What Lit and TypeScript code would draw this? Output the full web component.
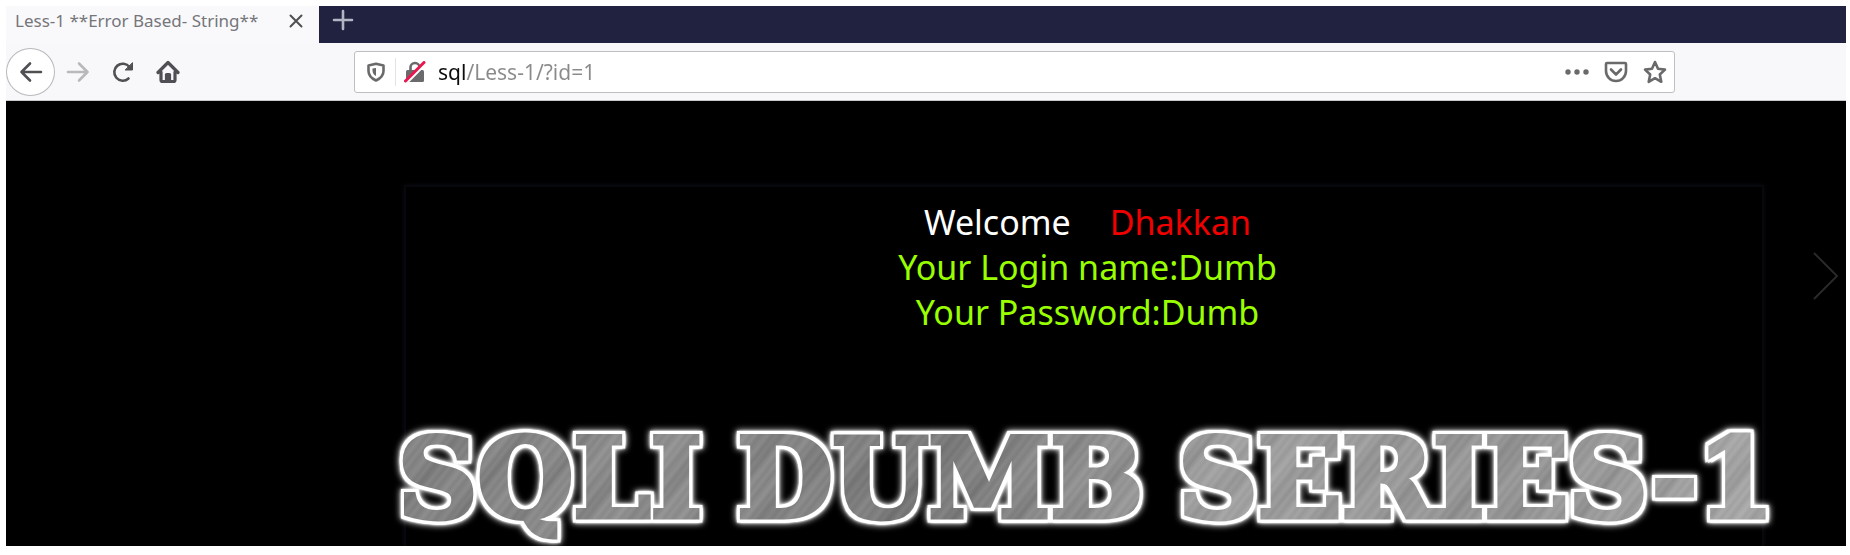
import { LitElement, html, css } from "lit";
import { customElement, property } from "lit/decorators.js";

@customElement("browser-chrome")
class BrowserChrome extends LitElement {
  @property() tabTitle = "";
  @property() address = "";

  static styles = css`
    :host {
      display: block;
      font-family: "Noto Sans", "Open Sans", sans-serif;
    }
    button {
      display: flex;
      align-items: center;
      justify-content: center;
      flex: none;
      padding: 0;
      border: 0;
      background: none;
      color: #505054;
    }
    svg {
      display: block;
      fill: none;
      stroke: currentColor;
      stroke-width: 2.6;
      stroke-linecap: round;
      stroke-linejoin: round;
    }
    .tabs {
      display: flex;
      height: 37px;
      background: #20223f;
    }
    .tab {
      display: flex;
      align-items: center;
      justify-content: space-between;
      box-sizing: border-box;
      width: 313px;
      padding: 0 11px 8px 9px;
      background: #f9f9fb;
      color: #75757a;
      font-size: 17px;
      line-height: 24px;
      white-space: nowrap;
    }
    .close {
      width: 24px;
      height: 24px;
    }
    .close svg {
      stroke-width: 2;
    }
    .add {
      width: 48px;
      height: 28px;
      color: #b4b5c4;
    }
    .toolbar {
      display: flex;
      align-items: center;
      height: 57px;
      border-bottom: 1px solid #c9c9cb;
      background: #f8f8fa;
    }
    .nav {
      display: flex;
      align-items: center;
      width: 348px;
      flex: none;
    }
    .nav button {
      width: 45px;
      height: 48px;
    }
    .nav .back {
      box-sizing: border-box;
      width: 49px;
      border: 1px solid #b9b9bb;
      border-radius: 50%;
      background: #fff;
    }
    .nav .forward {
      color: #b9b9bc;
    }
    .nav .home svg {
      stroke-width: 3.2;
    }
    .bar {
      display: flex;
      align-items: center;
      flex: 1;
      box-sizing: border-box;
      height: 42px;
      margin-right: 171px;
      padding: 0 0 0 8px;
      border: 1px solid #bfbfc1;
      border-radius: 3px;
      background: #fff;
    }
    .bar button {
      width: 39px;
      height: 36px;
      color: #6a6a6d;
    }
    .bar .shield {
      width: 26px;
    }
    .bar .lock {
      border-left: 1px solid #e3e3e5;
      height: 28px;
      margin-left: 6px;
    }
    .address {
      flex: 1;
      min-width: 0;
      padding: 0 0 0 4px;
      border: 0;
      outline: 0;
      font: 21px/28px "Noto Sans", "Open Sans", sans-serif;
      color: transparent;
      background: linear-gradient(90deg, #0c0c0d 32px, #8a8a8d 32px);
      -webkit-background-clip: text;
      background-clip: text;
    }
  `;

  render() {
    return html`
      <div class="tabs">
        <div class="tab">
          <span>${this.tabTitle}</span>
          <button class="close" aria-label="Close tab">
            <svg width="14" height="14" viewBox="0 0 14 14"><path d="M1.5 1.5 12.5 12.5M12.5 1.5 1.5 12.5" /></svg>
          </button>
        </div>
        <button class="add" aria-label="New tab">
          <svg width="22" height="22" viewBox="0 0 22 22"><path d="M11 2V20M2 11H20" /></svg>
        </button>
      </div>
      <div class="toolbar">
        <div class="nav">
          <button class="back" aria-label="Back">
            <svg width="24" height="24" viewBox="0 0 24 24"><path d="M22 12H2.500M11 3.500 2.500 12 11 20.500" /></svg>
          </button>
          <button class="forward" aria-label="Forward">
            <svg width="24" height="24" viewBox="0 0 24 24"><path d="M2 12H21.500M13 3.500 21.500 12 13 20.500" /></svg>
          </button>
          <button aria-label="Reload">
            <svg width="24" height="24" viewBox="0 0 24 24"><path d="M17.500 18.500A8.500 8.500 0 1 1 18.500 7" /><path d="M21.500 3V10H14.500Z" fill="currentColor" stroke-width="1" /></svg>
          </button>
          <button class="home" aria-label="Home">
            <svg width="24" height="24" viewBox="0 0 24 24"><path d="M2 12.500 12 2.500 22 12.500M5 12V20Q5 21.500 6.500 21.500H17.500Q19 21.500 19 20V12" /><path d="M10.500 20V14.500H13.500V20Z" fill="currentColor" /></svg>
          </button>
        </div>
        <div class="bar">
          <button class="shield" aria-label="Tracking protection">
            <svg width="20" height="20" viewBox="0 0 20 20"><path d="M10 1.800 17.500 3.500V9Q17.500 15 10 18.500Q2.500 15 2.500 9V3.500Z" /><path d="M10 6V14Q6.500 12 6.500 8.500V6.500Z" fill="currentColor" style="stroke:none" /></svg>
          </button>
          <button class="lock" aria-label="Connection is not secure">
            <svg width="22" height="22" viewBox="0 0 22 22"><path d="M6.500 10V6.500a4.500 4.500 0 0 1 9 0V10" /><rect x="2" y="9" width="18" height="12" rx="1.500" fill="currentColor" style="stroke:none" /><path d="M2.500 21 21 2.500" style="stroke:#fff;stroke-width:4" /><path d="M1.500 20 20 1.500" style="stroke:#e8174f;stroke-width:3" /></svg>
          </button>
          <input class="address" aria-label="Address" .value=${this.address} />
          <button aria-label="Page actions">
            <svg width="24" height="24" viewBox="0 0 24 24"><g fill="currentColor" style="stroke:none"><circle cx="3" cy="12" r="2.700" /><circle cx="12" cy="12" r="2.700" /><circle cx="21" cy="12" r="2.700" /></g></svg>
          </button>
          <button aria-label="Save to Pocket">
            <svg width="24" height="24" viewBox="0 0 24 24"><path d="M3 3H21Q22 3 22 4V11A10 10 0 0 1 2 11V4Q2 3 3 3ZM7 9.500 12 14.500 17 9.500" /></svg>
          </button>
          <button aria-label="Bookmark this page">
            <svg width="24" height="24" viewBox="0 0 24 24"><path d="M12 2 15 8.800 22 9.600 16.800 14.500 18.300 21.800 12 18.200 5.700 21.800 7.200 14.500 2 9.600 9 8.800Z" /></svg>
          </button>
        </div>
      </div>
    `;
  }
}

@customElement("app-root")
class AppRoot extends LitElement {
  static styles = css`
    :host {
      display: block;
      padding: 6px 4px 9px 6px;
      background: #fff;
    }
    .page {
      display: flex;
      box-sizing: border-box;
      height: 445px;
      padding: 84px 6px 0 398px;
      overflow: hidden;
      background: #000;
    }
    .panel {
      flex: 1;
      min-width: 0;
      border: 2px solid #07070e;
      border-bottom: 0;
      box-shadow: 0 0 5px #0b0b16;
    }
    .message {
      padding: 13px 0 0 7px;
      text-align: center;
      font: 34px/45px "Noto Sans", "Open Sans", sans-serif;
      color: #99ff00;
    }
    .message p {
      margin: 0;
    }
    .greeting {
      display: flex;
      justify-content: center;
      gap: 39px;
      color: #fff;
    }
    .name {
      color: #f00000;
    }
    .banner {
      display: flex;
      justify-content: space-between;
      margin: 81px -16px 0 -12px;
      padding: 0 4px;
      font: bold 110px/125px "DejaVu Serif", serif;
      white-space: nowrap;
      color: transparent;
      -webkit-text-stroke: 5px transparent;
      background:
        repeating-linear-gradient(128deg, #ffffff10 0, #00000008 4px, #ffffff08 7px, #0000000e 11px, #ffffff10 17px),
        repeating-linear-gradient(131deg, #ffffff10 0, #0000000c 19px, #ffffff0a 31px, #ffffff10 47px),
        linear-gradient(100deg, #7e7e7e, #8c8c8c 20%, #777 38%, #a0a0a0 60%, #939393 80%, #a8a8a8);
      -webkit-background-clip: text;
      background-clip: text;
      filter: drop-shadow(3px 0 0 #fff) drop-shadow(-3px 0 0 #fff) drop-shadow(0 3px 0 #fff)
        drop-shadow(0 -3px 0 #fff) drop-shadow(0 0 1px #fff) drop-shadow(0 0 3px #fff);
    }
    .next {
      align-self: flex-start;
      width: 76px;
      height: 60px;
      margin: 62px 0 0;
      padding: 0;
      border: 0;
      background: none;
      text-align: right;
    }
    .next svg {
      fill: none;
      stroke: #292929;
      stroke-width: 2;
    }
  `;

  render() {
    return html`
      <browser-chrome tabTitle="Less-1 **Error Based- String**" address="sql/Less-1/?id=1"></browser-chrome>
      <main class="page">
        <section class="panel">
          <div class="message">
            <p class="greeting"><span>Welcome</span><span class="name">Dhakkan</span></p>
            <p>Your Login name:Dumb</p>
            <p>Your Password:Dumb</p>
          </div>
          <h1 class="banner"><span>SQLI</span> <span>DUMB</span> <span>SERIES-1</span></h1>
        </section>
        <button class="next" aria-label="Next">
          <svg width="28" height="50" viewBox="0 0 28 50"><path d="M2 2 25 25 2 48" /></svg>
        </button>
      </main>
    `;
  }
}
